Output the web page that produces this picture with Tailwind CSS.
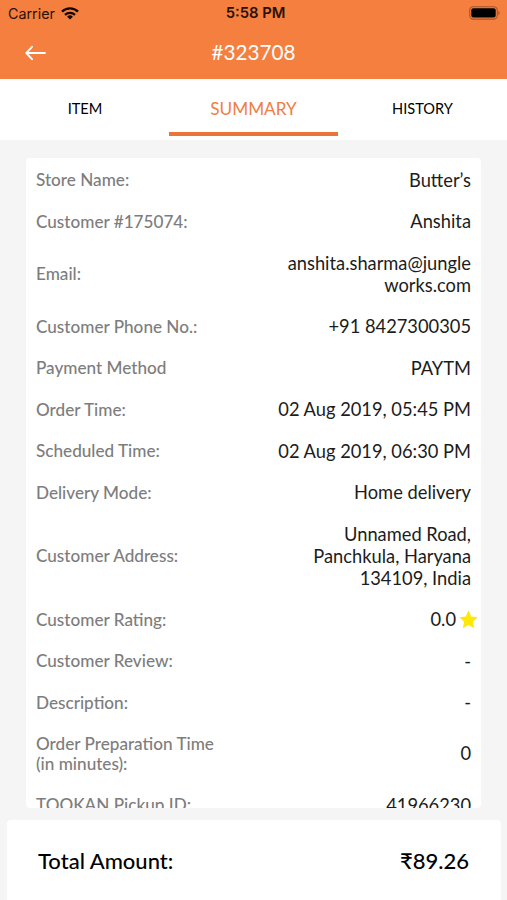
<!DOCTYPE html>
<html lang="en">

<head>
    <meta charset="UTF-8">
    <meta name="viewport" content="width=device-width, initial-scale=1.0">
    <title>Order #323708</title>
    <script src="https://cdn.jsdelivr.net/npm/@tailwindcss/browser@4"></script>
</head>

<body class="bg-[#f5f5f5] font-['Lato',sans-serif] text-[#1c1c1c]">
    <div class="flex flex-col h-[900px] overflow-hidden">
        <header class="h-[79px] shrink-0 bg-[#f57f3f]">
            <!-- status bar -->
            <div class="grid grid-cols-3 items-center h-[27px] pl-2 pr-[7px] font-['Inter',sans-serif] text-[14.8px] text-[#2a1005]">
                <div class="flex items-center gap-[6px]">
                    <span class="text-[14.3px]">Carrier</span>
                    <svg class="w-[18px] h-[13px]" viewBox="0 0 18 13" fill="none" stroke="#160600" stroke-width="2.3">
                        <path d="M1 4.7a11.5 11.5 0 0 1 16 0" />
                        <path d="M4 7.9a7.2 7.2 0 0 1 10 0" />
                        <path d="M9 12.6l-2.9-2.9a4.1 4.1 0 0 1 5.8 0z" fill="#160600" stroke="none" />
                    </svg>
                </div>
                <span class="text-center font-semibold pl-[3px]">5:58 PM</span>
                <svg class="justify-self-end -mt-[1px] w-[31px] h-[14px]" viewBox="0 0 31 14">
                    <rect x=".7" y=".7" width="27.6" height="12.4" rx="3.6" fill="none" stroke="#a55628" stroke-width="1.1" />
                    <rect x="2.3" y="2.3" width="24.4" height="9.2" rx="2" fill="#000" />
                    <path d="M29.3 4.9c1.7.5 1.7 3.5 0 4z" fill="#a55628" />
                </svg>
            </div>
            <div class="grid grid-cols-[60px_1fr_60px] items-center h-[51px] text-white">
                <svg class="ml-[25px] w-[22px] h-4" viewBox="0 0 22 16" fill="none" stroke="currentColor" stroke-width="1.9" stroke-linecap="round" stroke-linejoin="round">
                    <path d="M1.3 8H20M7 1.8L1.3 8 7 14.2" />
                </svg>
                <h1 class="text-center text-[20.7px] pt-[1px]">#323708</h1>
            </div>
        </header>

        <nav class="grid grid-cols-3 h-[61px] shrink-0 bg-white text-center text-[14.6px] leading-[60px] text-black">
            <a class="pl-[1px]">ITEM</a>
            <a class="border-b-4 border-[#ea7536] h-[57px] text-[17.2px] text-[#f07d42]">SUMMARY</a>
            <a>HISTORY</a>
        </nav>

        <main class="mt-[18px] mx-[26px] h-[650px] shrink-0 overflow-hidden rounded-sm bg-white pt-[1.5px] pl-2.5 pr-2.5">
            <div class="flex items-center justify-between h-[41.5px]">
                <span class="text-[17.15px] font-medium text-[#7d7d7d]">Store Name:</span>
                <span class="text-[18.3px]">Butter’s</span>
            </div>
            <div class="flex items-center justify-between h-[41.5px]">
                <span class="text-[17.15px] font-medium text-[#7d7d7d]">Customer #175074:</span>
                <span class="text-[18.3px]">Anshita</span>
            </div>
            <div class="flex items-center justify-between h-[63.5px]">
                <span class="text-[17.15px] font-medium text-[#7d7d7d]">Email:</span>
                <span class="text-[18.3px] leading-[22px] text-right">anshita.sharma@jungle<br>works.com</span>
            </div>
            <div class="flex items-center justify-between h-[41.5px]">
                <span class="text-[17.15px] font-medium text-[#7d7d7d]">Customer Phone No.:</span>
                <span class="text-[18.3px]">+91 8427300305</span>
            </div>
            <div class="flex items-center justify-between h-[41.5px]">
                <span class="text-[17.15px] font-medium text-[#7d7d7d]">Payment Method</span>
                <span class="text-[18.3px]">PAYTM</span>
            </div>
            <div class="flex items-center justify-between h-[41.5px]">
                <span class="text-[17.15px] font-medium text-[#7d7d7d]">Order Time:</span>
                <span class="text-[18.3px]">02 Aug 2019, 05:45 PM</span>
            </div>
            <div class="flex items-center justify-between h-[41.5px]">
                <span class="text-[17.15px] font-medium text-[#7d7d7d]">Scheduled Time:</span>
                <span class="text-[18.3px]">02 Aug 2019, 06:30 PM</span>
            </div>
            <div class="flex items-center justify-between h-[41.5px]">
                <span class="text-[17.15px] font-medium text-[#7d7d7d]">Delivery Mode:</span>
                <span class="text-[18.3px]">Home delivery</span>
            </div>
            <div class="flex items-center justify-between h-[85.5px]">
                <span class="text-[17.15px] font-medium text-[#7d7d7d]">Customer Address:</span>
                <span class="text-[18.3px] leading-[22px] text-right">Unnamed Road,<br>Panchkula, Haryana<br>134109, India</span>
            </div>
            <div class="flex items-center justify-between h-[41.5px]">
                <span class="text-[17.15px] font-medium text-[#7d7d7d]">Customer Rating:</span>
                <span class="flex items-center gap-[3px] -mr-[7px] text-[18.3px]">0.0
                    <svg class="w-[19px] h-[19px] -mt-[1px]" viewBox="0 0 19 19" fill="#ffe70a">
                        <path d="M9.5 .3l2.7 6.1 6.5.8-4.8 4.5 1.3 6.6-5.7-3.2-5.7 3.2 1.3-6.6L.3 7.2l6.5-.8z" />
                    </svg>
                </span>
            </div>
            <div class="flex items-center justify-between h-[41.5px]">
                <span class="text-[17.15px] font-medium text-[#7d7d7d]">Customer Review:</span>
                <span class="text-[18.3px]">-</span>
            </div>
            <div class="flex items-center justify-between h-[41.5px]">
                <span class="text-[17.15px] font-medium text-[#7d7d7d]">Description:</span>
                <span class="text-[18.3px]">-</span>
            </div>
            <div class="flex items-center justify-between h-[61px]">
                <span class="text-[17.15px] leading-5 font-medium text-[#7d7d7d]">Order Preparation Time<br>(in minutes):</span>
                <span class="text-[18.3px]">0</span>
            </div>
            <div class="flex items-center justify-between h-[41.5px]">
                <span class="text-[17.15px] font-medium text-[#7d7d7d]">TOOKAN Pickup ID:</span>
                <span class="text-[18.3px]">41966230</span>
            </div>
        </main>

        <footer class="flex items-center justify-between mt-3 ml-[7px] mr-1.5 h-20 shrink-0 rounded-t-sm bg-white pl-[31px] pr-8 text-[22px] font-medium text-black">
            <span>Total Amount:</span>
            <span>₹89.26</span>
        </footer>
    </div>
</body>

</html>
